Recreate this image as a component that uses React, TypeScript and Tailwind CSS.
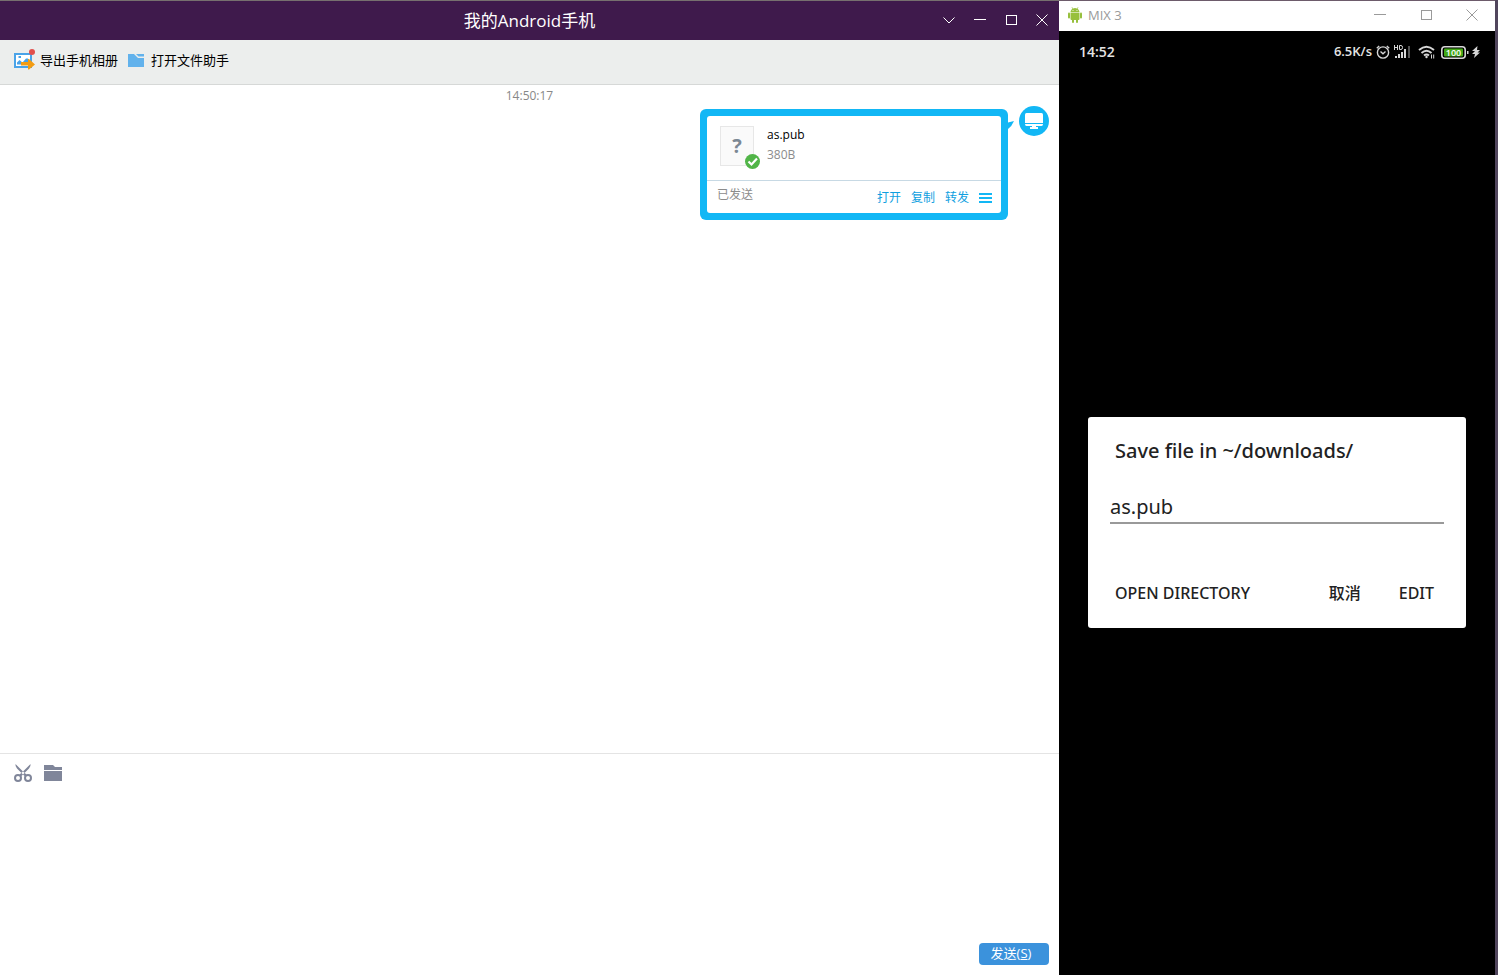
import React, { useState } from "react";

function ExportAlbumIcon() {
  return (
    <svg width="22" height="22" viewBox="0 0 22 22" aria-hidden="true">
      <rect x="1" y="5" width="16" height="13" fill="#fff" stroke="#4aa3e8" strokeWidth="2" />
      <path d="M3 15.500v-2l2.500-2.500 3 2.500 3.500-4h2l1 2v4z" fill="#4aa3e8" />
      <rect x="4.500" y="7" width="2.500" height="2" fill="#4aa3e8" />
      <path d="M7 13h7v-3h1l6 5.500-6 5h-1v-4H7z" fill="#f39c12" />
      <circle cx="18" cy="3" r="3" fill="#e2504c" />
    </svg>
  );
}

function FileHelperIcon() {
  return (
    <svg width="16" height="14" viewBox="0 0 16 14" aria-hidden="true">
      <path d="M0 1h6l4 4h6v9H0z" fill="#62b2ec" />
      <path d="M8 1h8v2.500h-5.500z" fill="#62b2ec" />
    </svg>
  );
}

function AndroidIcon() {
  return (
    <svg width="14" height="16" viewBox="0 0 14 16" fill="#97c03d" aria-hidden="true">
      <path d="M2.500 5.200C2.600 3.500 3.500 2.400 4.500 1.700L3.600.4l.4-.3 1 1.400a5 5 0 0 1 4 0l1-1.400.4.3-.9 1.300c1 .7 1.900 1.800 2 3.500z" />
      <path d="M2.500 5.800h9V12q0 1-1 1h-7q-1 0-1-1z" />
      <rect y="5.500" width="2" height="6" rx="1" />
      <rect x="12" y="5.500" width="2" height="6" rx="1" />
      <rect x="4" y="11" width="2" height="5" rx="1" />
      <rect x="8" y="11" width="2" height="5" rx="1" />
      <circle cx="5" cy="3.500" r=".5" fill="#fff" />
      <circle cx="9" cy="3.500" r=".5" fill="#fff" />
    </svg>
  );
}

function ChevronIcon() {
  return (
    <svg width="12" height="12" viewBox="0 0 12 12" fill="none" stroke="currentColor" aria-hidden="true">
      <path d="M.5 3.500 6 9l5.500-5.500" />
    </svg>
  );
}

function MinimizeIcon() {
  return (
    <svg width="12" height="12" viewBox="0 0 12 12" fill="none" stroke="currentColor" aria-hidden="true">
      <path d="M0 5.500h12" />
    </svg>
  );
}

function MaximizeIcon() {
  return (
    <svg width="12" height="12" viewBox="0 0 12 12" fill="none" stroke="currentColor" aria-hidden="true">
      <rect x="1.500" y="1.500" width="10" height="9" />
    </svg>
  );
}

function CloseIcon() {
  return (
    <svg width="12" height="12" viewBox="0 0 12 12" fill="none" stroke="currentColor" aria-hidden="true">
      <path d="M.5.500l11 11M11.500.500l-11 11" />
    </svg>
  );
}

function MonitorIcon() {
  return (
    <svg width="18" height="16" viewBox="0 0 18 16" fill="#fff" aria-hidden="true">
      <path d="M1.500 0h15Q18 0 18 1.500V10H0V1.500Q0 0 1.500 0z" />
      <path d="M0 11h18q0 2-1.500 2H11v1h2v2H5v-2h2v-1H1.500Q0 13 0 11z" />
    </svg>
  );
}

function CheckBadge() {
  return (
    <svg width="15" height="15" viewBox="0 0 15 15" aria-hidden="true">
      <circle cx="7.500" cy="7.500" r="7.500" fill="#51b548" />
      <path d="M3.500 7.500l3 3 5.500-6" fill="none" stroke="#fff" strokeWidth="2.200" />
    </svg>
  );
}

function ScissorsIcon() {
  return (
    <svg width="18" height="18" viewBox="0 0 18 18" fill="none" stroke="#80869a" aria-hidden="true">
      <path d="M1.500 0Q1 2.500 3 4.500L10.500 12l2-1.500-3.500-3zM16.500 0Q17 2.500 15 4.500L7.500 12l-2-1.500 3.500-3z" fill="#80869a" stroke="none" />
      <circle cx="4" cy="14" r="3" strokeWidth="2" />
      <circle cx="14" cy="14" r="3" strokeWidth="2" />
    </svg>
  );
}

function FolderIcon() {
  return (
    <svg width="18" height="16" viewBox="0 0 18 16" fill="#80869a" aria-hidden="true">
      <path d="M0 0h9l2 2h7v3H0z" />
      <path d="M0 6h18v10H0z" />
    </svg>
  );
}

function AlarmIcon() {
  return (
    <svg width="14" height="14" viewBox="0 0 14 14" fill="none" stroke="#d6d6d6" strokeWidth="1.400" aria-hidden="true">
      <circle cx="7" cy="7.500" r="5.600" />
      <path d="M4.500 6.500L7 8.700l2.500-2.200M.8 3.200L3.200 1M13.200 3.200L10.800 1" />
    </svg>
  );
}

function SignalIcon() {
  return (
    <svg width="17" height="14" viewBox="0 0 17 14" fill="#d6d6d6" aria-hidden="true">
      <path d="M.5 0v5M3.500 0v5M.5 2.500h3M5.500.500h1.500q1.500 0 1.500 2t-1.500 2H5.500z" fill="none" stroke="#d6d6d6" />
      <rect x="1" y="11" width="2" height="2" />
      <rect x="4" y="9" width="2" height="4" />
      <rect x="7" y="7" width="2" height="6" />
      <rect x="10" y="4" width="2" height="9" />
      <rect x="14" y="1" width="2" height="12" fill="#555" />
    </svg>
  );
}

function WifiIcon() {
  return (
    <svg width="18" height="14" viewBox="0 0 18 14" fill="none" stroke="#d6d6d6" strokeWidth="1.900" aria-hidden="true">
      <path d="M1 5q7.500-6.500 15 0M3.500 8q5-4.500 10 0M6 10.500q2.500-2.200 5 0" />
      <circle cx="8.500" cy="12" r="1.200" fill="#d6d6d6" stroke="none" />
      <path d="M13.500 9.500v4M15.700 9.500v4" strokeWidth="1" />
    </svg>
  );
}

function BatteryIcon() {
  return (
    <svg width="28" height="13" viewBox="0 0 28 13" aria-hidden="true">
      <rect x=".8" y=".8" width="23.400" height="11.400" rx="3" fill="#000" stroke="#d6d6d6" strokeWidth="1.600" />
      <rect x="3" y="2.500" width="19" height="8" rx="1" fill="#43a816" />
      <rect x="26" y="5" width="1.500" height="3" fill="#d6d6d6" />
      <text x="12.500" y="9.800" textAnchor="middle" fontFamily="Open Sans, sans-serif" fontSize="9" fontWeight="600" fill="#fff">
        100
      </text>
    </svg>
  );
}

function BoltIcon() {
  return (
    <svg width="8" height="12" viewBox="0 0 8 12" fill="#d6d6d6" aria-hidden="true">
      <path d="M5.500 0L0 5h3L0 8h3l-1 4 6-5.500H5.500L8 4H5z" />
    </svg>
  );
}

function ChatWindow() {
  const [draft, setDraft] = useState("");
  return (
    <main className="flex min-w-0 flex-1 flex-col bg-white">
      <header className="grid h-10 grid-cols-[1fr_auto_1fr] items-center border-t border-[#77706f] bg-[#3f1a4c] text-white">
        <span />
        <h1 className="text-[17px] leading-6">我的Android手机</h1>
        <div className="flex items-center justify-end gap-[19px] pr-[11px] pb-[2px]">
          <button aria-label="展开"><ChevronIcon /></button>
          <button aria-label="最小化"><MinimizeIcon /></button>
          <button aria-label="最大化"><MaximizeIcon /></button>
          <button aria-label="关闭"><CloseIcon /></button>
        </div>
      </header>

      <nav className="flex h-[45px] items-center gap-[10px] border-b border-[#d6d8d7] bg-[#eceeed] pb-[5px] pl-[14px] text-[13px] leading-5 text-black">
        <button className="flex items-center gap-1">
          <ExportAlbumIcon />
          <span>导出手机相册</span>
        </button>
        <button className="flex items-center gap-[7px]">
          <FileHelperIcon />
          <span>打开文件助手</span>
        </button>
      </nav>

      <section className="flex-1 pt-[2px]">
        <p className="text-center text-xs leading-[18px] text-[#888]">14:50:17</p>
        <div className="flex items-start justify-end pt-[1px] pr-[10px]">
          <article className="mt-[3px] w-[308px] rounded-md bg-[#12b7f5] p-[7px]">
            <div className="overflow-hidden rounded-[3px] bg-white">
              <div className="flex h-16 items-start gap-[13px] pl-[13px] pt-[10px]">
                <div className="relative flex h-10 w-[34px] items-center justify-center border border-[#e7e7e7] bg-[#fafafa] text-xl font-bold text-[#7c8894]">
                  ?
                  <span className="absolute -right-[7px] -bottom-[4px]"><CheckBadge /></span>
                </div>
                <div className="-mt-px text-xs leading-5">
                  <p className="text-black">as.pub</p>
                  <p className="text-[#8c8c8c]">380B</p>
                </div>
              </div>
              <div className="flex h-[33px] items-center justify-between border-t border-[#c7d9e4] pr-[9px] pl-[10px] text-xs leading-4">
                <span className="pb-1 text-[#8c8c8c]">已发送</span>
                <div className="flex items-center gap-[10px] pt-px text-[#0f9fdf]">
                  <button>打开</button>
                  <button>复制</button>
                  <button>转发</button>
                  <button aria-label="更多">
                    <svg width="13" height="10" viewBox="0 0 13 10" fill="#12b7f5" aria-hidden="true">
                      <path d="M0 0h13v2H0zM0 4h13v2H0zM0 8h13v2H0z" />
                    </svg>
                  </button>
                </div>
              </div>
            </div>
          </article>
          <svg className="mt-[15px] mr-[5px]" width="6" height="8" viewBox="0 0 6 8" aria-hidden="true">
            <path d="M0 1.500L6 0Q4 5 0 8z" fill="#12b7f5" />
          </svg>
          <div className="flex size-[30px] items-center justify-center rounded-full bg-[#12b7f5]">
            <MonitorIcon />
          </div>
        </div>
      </section>

      <section className="flex h-[222px] flex-col border-t border-[#e4e4e4]">
        <div className="flex items-center gap-3 pt-[10px] pl-[14px]">
          <button aria-label="截图"><ScissorsIcon /></button>
          <button aria-label="发送文件"><FolderIcon /></button>
        </div>
        <textarea
          aria-label="消息"
          value={draft}
          onChange={(event) => setDraft(event.target.value)}
          className="mt-2 w-full flex-1 resize-none px-4 text-sm outline-none"
        />
        <div className="flex justify-end pt-2 pr-[10px] pb-[10px]">
          <button className="h-[22px] w-[70px] rounded-[4px] bg-[#3b92dc] pr-[6px] pb-[2px] text-[13px] leading-5 text-white">
            发送(<span className="underline">S</span>)
          </button>
        </div>
      </section>
    </main>
  );
}

function PhoneWindow() {
  const [fileName, setFileName] = useState("as.pub");
  return (
    <aside className="flex w-[439px] shrink-0 flex-col border-r-[3px] border-[#51465d] bg-black">
      <header className="flex h-[31px] items-center justify-between border-t border-[#6d5b6b] bg-white pr-[17px] pb-[2px] pl-[9px] text-[#9a9a9a]">
        <div className="flex items-center gap-[6px]">
          <AndroidIcon />
          <h2 className="text-[13px] leading-4">MIX 3</h2>
        </div>
        <div className="flex items-center gap-[34px]">
          <button aria-label="Minimize"><MinimizeIcon /></button>
          <button aria-label="Maximize"><MaximizeIcon /></button>
          <button aria-label="Close"><CloseIcon /></button>
        </div>
      </header>

      <div className="flex h-[42px] items-center justify-between pr-[15px] pl-5 text-[13px] font-semibold text-[#e4e4e4]">
        <span className="text-sm">14:52</span>
        <div className="flex items-center gap-1">
          <span>6.5K/s</span>
          <AlarmIcon />
          <SignalIcon />
          <span className="flex pl-[3px]"><WifiIcon /></span>
          <span className="flex items-center gap-[3px] pl-px">
            <BatteryIcon />
            <BoltIcon />
          </span>
        </div>
      </div>

      <div className="flex flex-1 flex-col justify-center px-[29px] pb-1 font-['Noto_Sans','Noto_Sans_CJK_SC',sans-serif]">
        <form
          role="dialog"
          aria-labelledby="save-title"
          onSubmit={(event) => event.preventDefault()}
          className="rounded-[3px] bg-white px-[22px] pt-5 pb-5 text-[#222]"
        >
          <h3 id="save-title" className="pl-[5px] text-[20px] leading-7 font-medium">
            Save file in ~/downloads/
          </h3>
          <input
            aria-labelledby="save-title"
            value={fileName}
            onChange={(event) => setFileName(event.target.value)}
            className="mt-6 block h-[35px] w-full border-b-2 border-[#999] pt-[2px] text-[20px] leading-7 outline-none"
          />
          <div className="mt-14 mb-[2px] flex h-[26px] items-center pr-[10px] pl-[5px] text-base leading-6 font-medium">
            <button type="button">OPEN DIRECTORY</button>
            <button type="button" className="mr-[38px] ml-auto">取消</button>
            <button type="submit">EDIT</button>
          </div>
        </form>
      </div>
    </aside>
  );
}

export default function App() {
  return (
    <div className="flex min-h-screen font-['Open_Sans','Noto_Sans_CJK_SC',sans-serif]">
      <ChatWindow />
      <PhoneWindow />
    </div>
  );
}
